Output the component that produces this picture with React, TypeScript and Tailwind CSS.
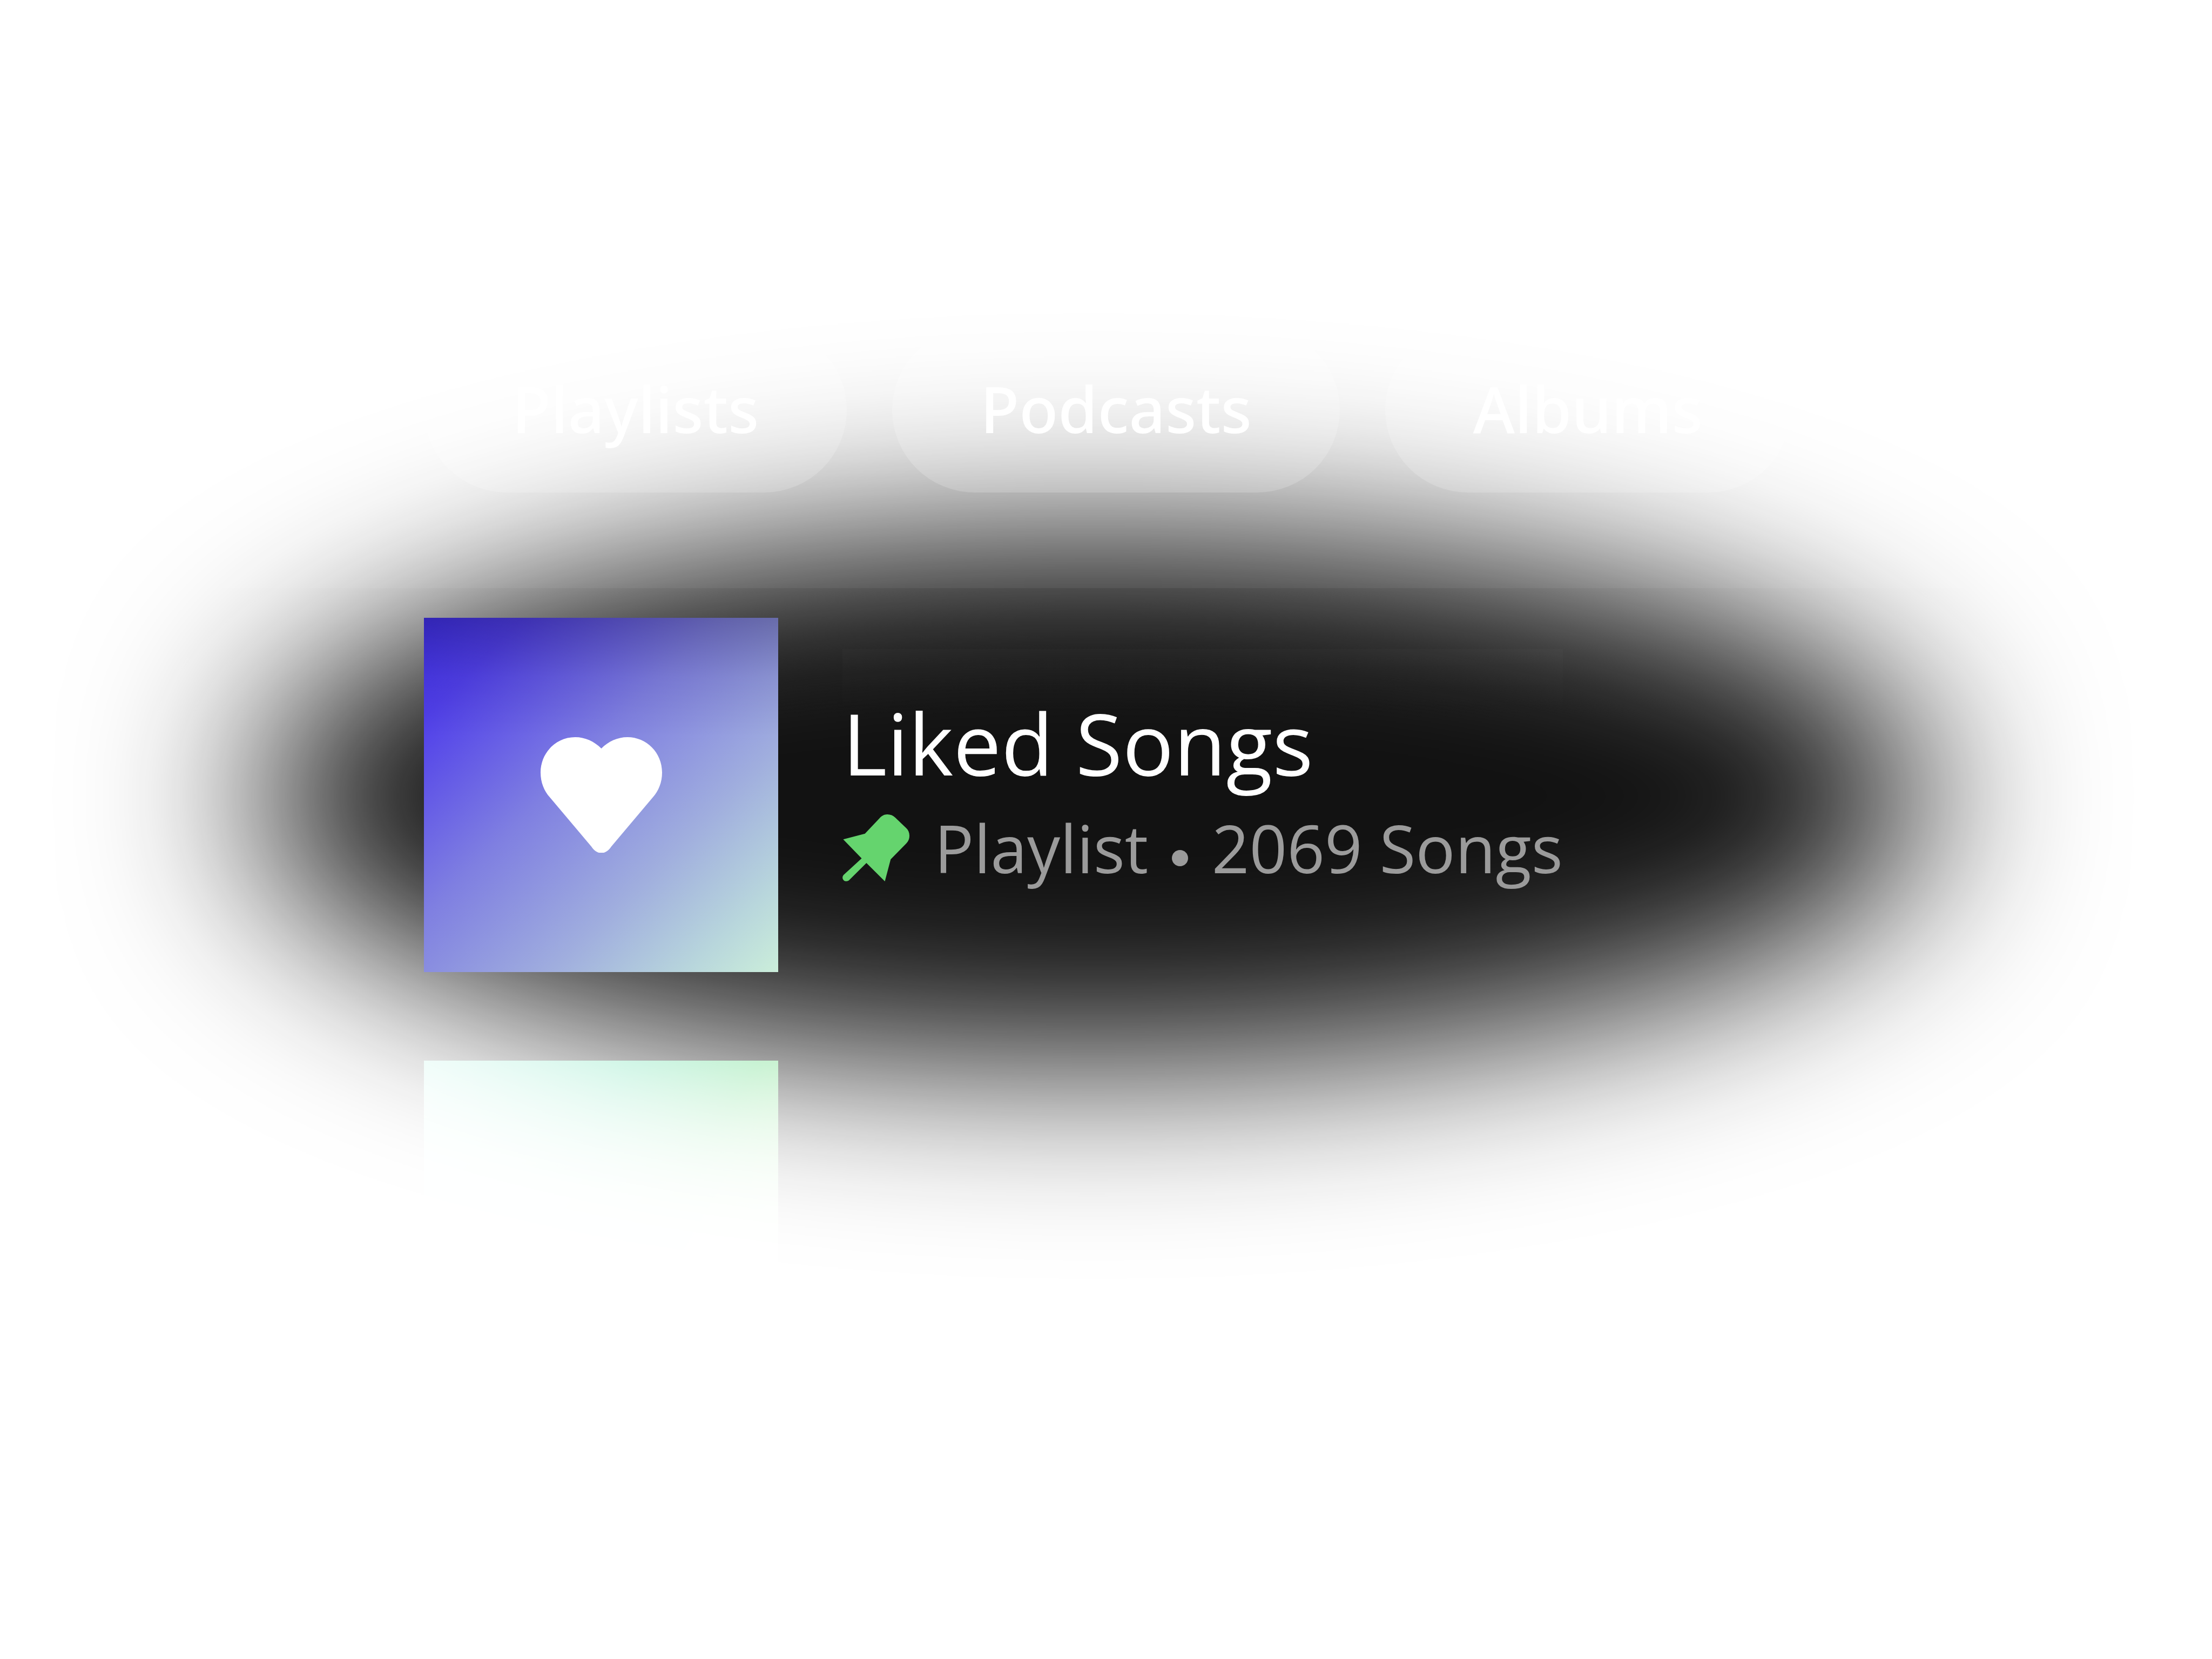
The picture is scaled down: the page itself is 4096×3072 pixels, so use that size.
const chips = ["Playlists", "Podcasts", "Albums"];

function Heart() {
  return (
    <svg viewBox="0 0 86 82" className="w-[225px] fill-white" aria-hidden="true">
      <path d="M43 8C38 3 31.5 0 24.500 0C11 0 0 11 0 25C0 32 2.500 38 6.500 42.500L36 77.500C38 80.500 40.500 82 43 82C45.500 82 48 80.500 50 77.500L79.500 42.500C83.500 38 86 32 86 25C86 11 75 0 61.500 0C54.500 0 48 3 43 8Z" />
    </svg>
  );
}

function Pin() {
  return (
    <svg viewBox="87 128 450 450" className="size-[124px] shrink-0 fill-[#65d46e]" aria-hidden="true">
      <path d="M92 296L238 258L335 155C350 138 368 128 388 128C410 128 428 136 442 150L515 220C530 234 537 252 537 272C537 292 530 308 517 322L411 430L372 578L248 455L132 570C122 579 105 580 96 572C85 562 85 545 95 534L216 424Z" />
    </svg>
  );
}

/* White veil with a soft elliptical opening over the highlighted row. */
function Veil() {
  return (
    <div className="pointer-events-none absolute inset-0 overflow-hidden">
      <div className="absolute top-[984px] left-[474px] h-[980px] w-[3100px] rounded-[50%] shadow-[0_0_0_4000px_#fff] blur-[168px]" />
    </div>
  );
}

export default function App() {
  return (
    <main className="relative min-h-screen overflow-hidden bg-[#121212] font-['Open_Sans',sans-serif]">
      <header className="bg-[#181818] pt-[606px] pb-[177px] pl-[785px]">
        <nav aria-label="Library filters" className="flex gap-[84px]">
          {chips.map((chip) => (
            <button
              key={chip}
              type="button"
              className="h-[306px] rounded-full bg-[#404040] px-[163px] pb-1 font-['Noto_Sans',sans-serif] text-[118px] leading-none font-medium text-white"
            >
              {chip}
            </button>
          ))}
        </nav>
      </header>
      <ul className="flex flex-col gap-[164px] bg-[linear-gradient(#0c0c0c,#121212_240px)] pt-[55px] pl-[785px]">
        <li className="relative z-10 flex items-center gap-[119px]">
          <div className="flex size-[656px] shrink-0 items-center justify-center bg-[linear-gradient(rgba(0,0,0,0.24),rgba(0,0,0,0.07)_110px,rgba(0,0,0,0)_220px),linear-gradient(135deg,#4130ee_0%,#503fea_14%,#7f7fe1_42%,#a0aede_68%,#b8d6dc_87%,#cbeeda_100%)]">
            <Heart />
          </div>
          <div className="flex h-[540px] flex-col justify-center bg-[linear-gradient(rgba(255,255,255,0.015),rgba(255,255,255,0)_120px)] pb-1">
            <h1 className="text-[158px] leading-[200px] text-white">Liked Songs</h1>
            <p className="flex items-center gap-[46px] text-[122px] leading-[190px] text-[#9b9b9b]">
              <Pin />
              <span>
                Playlist <span className="font-['Inter'] text-[96px] leading-none">•</span> 2069 Songs
              </span>
            </p>
          </div>
        </li>
        <li>
          <div className="size-[656px] bg-[linear-gradient(120deg,#84e8d0_0%,#68dfae_38%,#74de90_60%,#c0e898_100%)]" />
        </li>
      </ul>
      <Veil />
    </main>
  );
}
